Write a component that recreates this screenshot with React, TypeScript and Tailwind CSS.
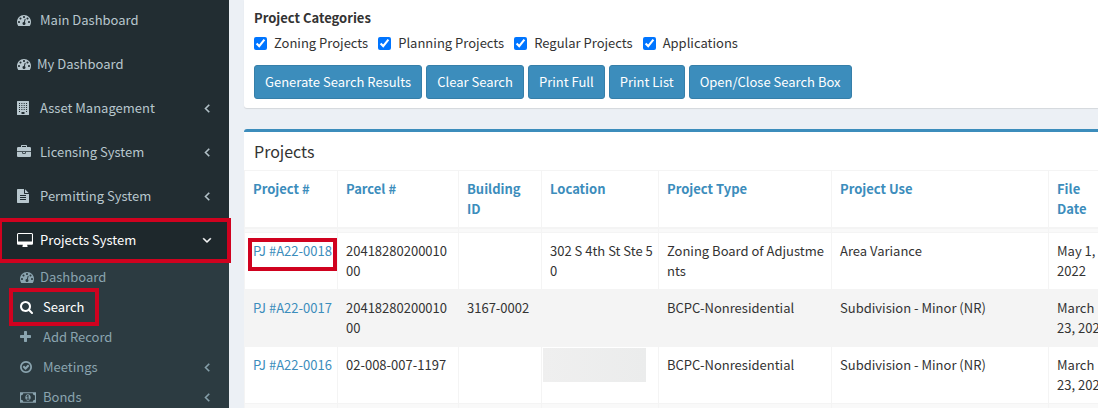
import { ReactNode } from "react";
import clsx from "clsx";

/* ---------------- icons ---------------- */

const paths = {
  dashboard:
    "M384 1152q0-53-37.5-90.5t-90.5-37.5-90.5 37.5-37.5 90.5 37.5 90.5 90.5 37.5 90.5-37.5 37.5-90.5zm192-448q0-53-37.5-90.5t-90.5-37.5-90.5 37.5-37.5 90.5 37.5 90.5 90.5 37.5 90.5-37.5 37.5-90.5zm428 481l101-382q6-26-7.5-48.5t-38.5-29.5-48 6.5-30 39.5l-101 382q-60 5-107 43.5t-63 98.5q-20 77 20 146t117 89 146-20 89-117q16-60-6-117t-72-91zm660-33q0-53-37.5-90.5t-90.5-37.5-90.5 37.5-37.5 90.5 37.5 90.5 90.5 37.5 90.5-37.5 37.5-90.5zm-640-640q0-53-37.5-90.5t-90.5-37.5-90.5 37.5-37.5 90.5 37.5 90.5 90.5 37.5 90.5-37.5 37.5-90.5zm448 192q0-53-37.5-90.5t-90.5-37.5-90.5 37.5-37.5 90.5 37.5 90.5 90.5 37.5 90.5-37.5 37.5-90.5zm320 448q0 261-141 483-19 29-54 29h-1402q-35 0-54-29-141-221-141-483 0-182 71-348t191-286 286-191 348-71 348 71 286 191 191 286 71 348z",
  building:
    "M64 0h1408q64 0 64 64v1664q0 64-64 64h-1408q-64 0-64-64v-1664q0-64 64-64zM256 256v128h128v-128zm300 0v128h128v-128zm300 0v128h128v-128zm300 0v128h128v-128zM256 512v128h128v-128zm300 0v128h128v-128zm300 0v128h128v-128zm300 0v128h128v-128zM256 768v128h128v-128zm300 0v128h128v-128zm300 0v128h128v-128zm300 0v128h128v-128zM256 1024v128h128v-128zm300 0v128h128v-128zm300 0v128h128v-128zm300 0v128h128v-128zM256 1280v128h128v-128zm900 0v128h128v-128zM576 1408v256h384v-256z",
  briefcase:
    "M640 256h512v-128h-512v128zm1152 640v480q0 66-47 113t-113 47h-1472q-66 0-113-47t-47-113v-480h672v160q0 26 19 45t45 19h320q26 0 45-19t19-45v-160h672zm-768 0v128h-256v-128h256zm768-480v384h-1792v-384q0-66 47-113t113-47h352v-160q0-40 28-68t68-28h576q40 0 68 28t28 68v160h352q66 0 113 47t47 113z",
  file:
    "M1468 476q14 14 28 36h-472v-472q22 14 36 28zm-476 164h544v1056q0 40-28 68t-68 28h-1344q-40 0-68-28t-28-68v-1600q0-40 28-68t68-28h800v544q0 40 28 68t68 28zm160 736v-64q0-14-9-23t-23-9h-704q-14 0-23 9t-9 23v64q0 14 9 23t23 9h704q14 0 23-9t9-23zm0-256v-64q0-14-9-23t-23-9h-704q-14 0-23 9t-9 23v64q0 14 9 23t23 9h704q14 0 23-9t9-23zm0-256v-64q0-14-9-23t-23-9h-704q-14 0-23 9t-9 23v64q0 14 9 23t23 9h704q14 0 23-9t9-23z",
  desktop:
    "M1792 992v-832q0-13-9.500-22.500t-22.500-9.500h-1600q-13 0-22.500 9.500t-9.500 22.500v832q0 13 9.500 22.500t22.500 9.500h1600q13 0 22.500-9.500t9.500-22.500zm128-832v1088q0 66-47 113t-113 47h-544q0 37 16 77.500t32 71 16 43.500q0 26-19 45t-45 19h-512q-26 0-45-19t-19-45q0-14 16-44t32-70 16-78h-544q-66 0-113-47t-47-113v-1088q0-66 47-113t113-47h1600q66 0 113 47t47 113z",
  search:
    "M1152 832q0-185-131.500-316.500t-316.500-131.500-316.500 131.500-131.500 316.500 131.500 316.500 316.500 131.500 316.500-131.500 131.500-316.500zm512 832q0 52-38 90t-90 38q-54 0-90-38l-343-342q-179 124-399 124-143 0-273.500-55.500t-225-150-150-225-55.500-273.500 55.500-273.500 150-225 225-150 273.500-55.500 273.500 55.500 225 150 150 225 55.500 273.500q0 220-124 399l343 343q37 37 37 90z",
  plus:
    "M1408 736v192q0 40-28 68t-68 28h-416v416q0 40-28 68t-68 28h-192q-40 0-68-28t-28-68v-416h-416q-40 0-68-28t-28-68v-192q0-40 28-68t68-28h416v-416q0-40 28-68t68-28h192q40 0 68 28t28 68v416h416q40 0 68 28t28 68z",
  check:
    "M1171 813l-422 422q-19 19-45 19t-45-19l-294-294q-19-19-19-45t19-45l102-102q19-19 45-19t45 19l147 147 275-275q19-19 45-19t45 19l102 102q19 19 19 45t-19 45zm141 83q0-148-73-273t-198-198-273-73-273 73-198 198-73 273 73 273 198 198 273 73 273-73 198-198 73-273zm224 0q0 209-103 385.500t-279.500 279.500-385.500 103-385.500-103-279.500-279.500-103-385.500 103-385.500 279.500-279.500 385.500-103 385.500 103 279.500 279.500 103 385.500z",
  money:
    "M0 256h1920v1280h-1920zM384 384q0 106-75 181t-181 75v512q106 0 181 75t75 181h1152q0-106 75-181t181-75v-512q-106 0-181-75t-75-181zM960 500q150 0 235 120t85 276-85 276-235 120-235-120-85-276 85-276 235-120zM768 1152h384v-96h-128v-448h-114l-148 137 77 80q42-37 55-57h2v288h-128z",
  left:
    "M1203 544q0 13-10 23l-393 393 393 393q10 10 10 23t-10 23l-50 50q-10 10-23 10t-23-10l-466-466q-10-10-10-23t10-23l466-466q10-10 23-10t23 10l50 50q10 10 10 23z",
  down:
    "M1395 736q0 13-10 23l-466 466q-10 10-23 10t-23-10l-466-466q-10-10-10-23t10-23l50-50q10-10 23-10t23 10l393 393 393-393q10-10 23-10t23 10l50 50q10 10 10 23z",
};

type IconName = keyof typeof paths;

function Icon({ name, wide }: { name: IconName; wide?: boolean }) {
  const isArrow = name === "left" || name === "down";

  return (
    <svg
      viewBox={wide ? "0 0 1920 1792" : "0 0 1792 1792"}
      className={clsx("shrink-0", wide ? "h-[15px] w-4" : "size-3.5")}
      fill="currentColor"
      fillRule="evenodd"
      stroke={isArrow ? "currentColor" : "none"}
      strokeWidth={70}
      aria-hidden="true"
    >
      <path d={paths[name]} />
    </svg>
  );
}

/* ---------------- data ---------------- */

type NavEntry = {
  label: string;
  icon: IconName;
  wide?: boolean;
  tight?: boolean;
  arrow?: "left" | "down";
  active?: boolean;
};

const mainNav: NavEntry[] = [
  { label: "Main Dashboard", icon: "dashboard" },
  { label: "My Dashboard", icon: "dashboard", tight: true },
  { label: "Asset Management", icon: "building", arrow: "left" },
  { label: "Licensing System", icon: "briefcase", arrow: "left" },
  { label: "Permitting System", icon: "file", arrow: "left" },
  { label: "Projects System", icon: "desktop", wide: true, arrow: "down", active: true },
];

const subNav: NavEntry[] = [
  { label: "Dashboard", icon: "dashboard", tight: true },
  { label: "Search", icon: "search", active: true },
  { label: "Add Record", icon: "plus" },
  { label: "Meetings", icon: "check", arrow: "left" },
  { label: "Bonds", icon: "money", wide: true, arrow: "left" },
];

const categories = ["Zoning Projects", "Planning Projects", "Regular Projects", "Applications"];

const actions = [
  "Generate Search Results",
  "Clear Search",
  "Print Full",
  "Print List",
  "Open/Close Search Box",
];

const columns = [
  "Project #",
  "Parcel #",
  "Building ID",
  "Location",
  "Project Type",
  "Project Use",
  "File Date",
];

const projects = [
  {
    id: "PJ #A22-0018",
    parcel: "2041828020001000",
    building: "",
    location: "302 S 4th St Ste 50",
    type: "Zoning Board of Adjustments",
    use: "Area Variance",
    date: "May 1, 2022",
    marked: true,
  },
  {
    id: "PJ #A22-0017",
    parcel: "2041828020001000",
    building: "3167-0002",
    location: "",
    type: "BCPC-Nonresidential",
    use: "Subdivision - Minor (NR)",
    date: "March 23, 2022",
  },
  {
    id: "PJ #A22-0016",
    parcel: "02-008-007-1197",
    building: "",
    location: "",
    redacted: true,
    type: "BCPC-Nonresidential",
    use: "Subdivision - Minor (NR)",
    date: "March 23, 2022",
  },
];

/* ---------------- sidebar ---------------- */

function NavItem({ item, sub }: { item: NavEntry; sub?: boolean }) {
  return (
    <li className="relative">
      <a
        href="#"
        className={clsx(
          "flex items-center pr-[15px]",
          sub ? "py-[5px] pl-5" : "py-3 pl-[17px]",
          item.active ? "text-white" : sub ? "text-[#8aa4af]" : "text-[#b8c7ce]",
          item.active && !sub && "bg-[#1e282c]"
        )}
      >
        <span className={clsx("flex shrink-0", item.tight ? "w-5" : "w-[23px]")}>
          <Icon name={item.icon} wide={item.wide} />
        </span>
        <span className="grow">{item.label}</span>
        {item.arrow && <Icon name={item.arrow} />}
      </a>
      {item.active && !sub && (
        <div className="pointer-events-none absolute -left-0.5 -right-0.5 top-0 h-[45px] border-4 border-[#d0021f]" />
      )}
      {item.active && sub && (
        <div className="pointer-events-none absolute left-[9px] -top-1 h-[38px] w-[90px] border-4 border-[#d0021f]" />
      )}
    </li>
  );
}

function Sidebar() {
  return (
    <aside className="relative z-10 w-[229px] shrink-0 bg-[#222d32]">
      <nav className="-mt-0.5">
        <ul>
          {mainNav.map(item => (
            <NavItem key={item.label} item={item} />
          ))}
        </ul>
        <ul className="bg-[#2c3b41]">
          {subNav.map(item => (
            <NavItem key={item.label} item={item} sub />
          ))}
        </ul>
      </nav>
    </aside>
  );
}

/* ---------------- table ---------------- */

function Cell({ children, breakAll }: { children?: ReactNode; breakAll?: boolean }) {
  return (
    <td className={clsx("border border-[#f4f4f4] py-2 pl-2 pr-1 align-top", breakAll && "break-all")}>
      {children}
    </td>
  );
}

function ProjectsTable() {
  return (
    <div className="overflow-hidden">
      <table className="w-full min-w-[874px] table-fixed border-collapse">
        <colgroup>
          <col className="w-[93px]" />
          <col className="w-[121px]" />
          <col className="w-[83px]" />
          <col className="w-[117px]" />
          <col className="w-[173px]" />
          <col className="w-[217px]" />
          <col />
        </colgroup>
        <thead>
          <tr>
            {columns.map(c => (
              <th
                key={c}
                className="border border-b-2 border-[#f4f4f4] py-2 pl-2 pr-4 text-left align-top font-bold"
              >
                <a href="#" className="text-[#3c8dbc]">{c}</a>
              </th>
            ))}
          </tr>
        </thead>
        <tbody>
          <tr className="h-1 bg-[#f9f9f9]">
            {columns.map(c => (
              <td key={c} className="border border-[#f4f4f4] p-0" />
            ))}
          </tr>
          {projects.map((p, i) => (
            <tr key={p.id} className={clsx("h-[57px]", i % 2 === 1 && "bg-[#f4f4f4]")}>
              <td className="relative border border-[#f4f4f4] py-2 pl-2 align-top whitespace-nowrap">
                <a href="#" className="text-[#3c8dbc]">{p.id}</a>
                {p.marked && (
                  <div className="pointer-events-none absolute left-[3px] top-[5px] h-[33px] w-[89px] border-4 border-[#d0021f]" />
                )}
              </td>
              <Cell breakAll>{p.parcel}</Cell>
              <Cell>{p.building}</Cell>
              {p.redacted ? (
                <td className="border border-[#f4f4f4] p-px align-top">
                  <div className="h-[34px] w-[103px] bg-linear-to-r from-[#efefef] to-[#ebecec]" />
                </td>
              ) : (
                <Cell breakAll>{p.location}</Cell>
              )}
              <Cell breakAll>{p.type}</Cell>
              <Cell>{p.use}</Cell>
              <Cell>{p.date}</Cell>
            </tr>
          ))}
          <tr className="h-[57px] bg-[#f9f9f9]">
            {columns.map(c => (
              <td key={c} className="border border-[#f4f4f4]" />
            ))}
          </tr>
        </tbody>
      </table>
    </div>
  );
}

/* ---------------- page ---------------- */

export default function App() {
  return (
    <div className="flex h-screen overflow-hidden bg-[#ecf0f5] font-['Noto_Sans_CJK_SC',sans-serif] text-[13px] leading-5 text-[#333]">
      <Sidebar />

      <main className="min-w-0 grow pl-[15px]">
        {/* Search box */}
        <section className="rounded-bl-[3px] bg-white px-2.5 pb-[9px] pt-2 shadow-[0_1px_1px_rgba(0,0,0,0.1)]">
          <fieldset>
            <legend className="mb-[5px] font-bold">Project Categories</legend>
            <div className="flex flex-wrap gap-x-2.5">
              {categories.map(c => (
                <label key={c} className="flex items-center gap-[7px]">
                  <input type="checkbox" defaultChecked className="size-[13px]" />
                  {c}
                </label>
              ))}
            </div>
          </fieldset>
          <div className="mt-3 flex flex-wrap gap-1">
            {actions.map(a => (
              <button
                key={a}
                type="button"
                className="rounded-[3px] border border-[#367fa9] bg-[#3c8dbc] px-2.5 py-1.5 text-white"
              >
                {a}
              </button>
            ))}
          </div>
        </section>

        {/* Results */}
        <section className="mt-[21px] rounded-tl-[3px] border-t-3 border-[#3c8dbc] bg-white">
          <h1 className="px-2.5 py-2 text-base leading-[22px]">Projects</h1>
          <ProjectsTable />
        </section>
      </main>
    </div>
  );
}
